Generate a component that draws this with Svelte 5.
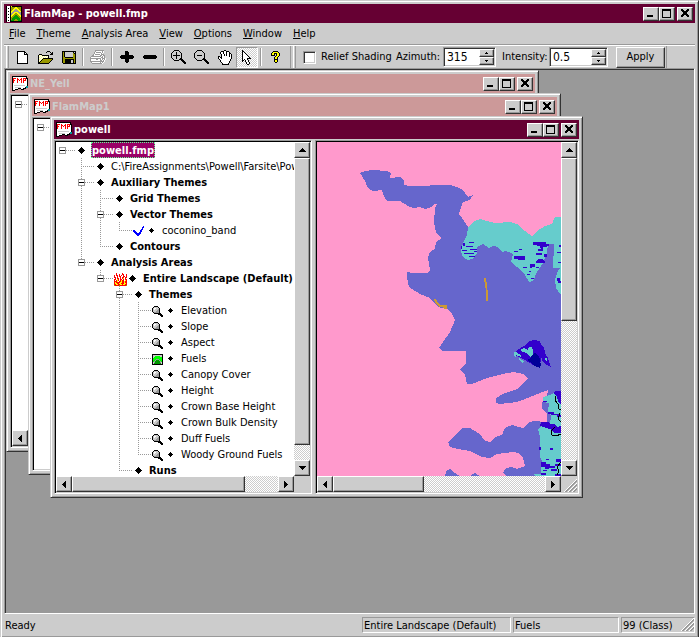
<script>
  const palette = {
    k: '#000', w: '#fff', g: '#999', s: '#ccc', d: '#666', y: '#ff0', o: '#990', Y: '#ffff99',
    r: '#f00', t: '#099', b: '#00f', G: '#0f0', e: '#090', a: '#cc9900'
  };

  const icons = {
    app: [
      'kwwwkykkkkkkkkkk', 'kwwwkooooyyooook', 'kwkwkoooyyyyoook', 'kwwwkooyyggyyook', 'kwwwkoyyggggyyok', 'kwkwkyyggggggyyk',
      'kwwwkyggyyyygggk', 'kwwwkggyyooyyggk', 'kwkwkgyyooooyygk', 'kwwwkyyooeeooyyk', 'kwwwkyooeeeeooyk', 'kwkwkooeeeeeeook',
      'kwwwkoeeeeeeeeok', 'kwwwkoeeeooeeeok', 'kwkwkeeeooooeeek', 'kwwwkkkkkkkkkkkk'
    ],
    doc: [
      'kkkkkkkkkkkkkkk.', 'kwwwwwwwwwwwwwk.', 'krrrwrwwwrwrrrkk', 'krwwwrrwrrwrwrwk', 'krrwwrwrwrwrrrwk', 'krwwwrwwwrwrwwwk',
      'krwwwrwwwrwrwwwk', 'kwwwwwwwwwwwwwwk', 'kwwwwwwwwwwwwwwk', 'kwssssssssssswwk', 'kwwwwwwwwwwwwwtt', 'kwwsssssswwwwktt',
      'kwwwwwkkkwwkkk..', 'kwwkkk...kkk....', 'kkk.............'
    ],
    blank: [
      'kkkkkkkk...', 'kwwwwwwkk..', 'kwwwwwwkwk.', 'kwwwwwwkkkk', 'kwwwwwwwwwk', 'kwwwwwwwwwk', 'kwwwwwwwwwk',
      'kwwwwwwwwwk', 'kwwwwwwwwwk', 'kwwwwwwwwwk', 'kwwwwwwwwwk', 'kwwwwwwwwwk', 'kkkkkkkkkkk'
    ],
    open: [
      '.........kkk...', '........k...k.k', '.............kk', '.kkk........kkk', 'kYwYkkkkkkk....', 'kwYwYwYwYwk....', 'kYwYwYwYwYk....',
      'kwYwYkkkkkkkkkk', 'kYwYkoooooooook', 'kwYkoooooooook.', 'kYkoooooooook..', 'kkoooooooook...', 'kkkkkkkkkkk....'
    ],
    save: [
      'kkkkkkkkkkkkkk', 'kokssssssssksk', 'kokssssssssokk', 'kokssssssssook', 'kokssssssssook', 'kokssssssssook', 'kookkkkkkkkook',
      'kooooooooooook', 'kookkkkkkkkkok', 'kookkkkkksskok', 'kookkkkkksskok', 'kookkkkkksskok', '.kkkkkkkkkkkkk'
    ],
    print: [
      '.....ggggggggg..', '.....gwwwwwwgw..', '....gwgggggwgw..', '....gwwwwwwgw...', '...gwgggggwggg..', '..ggwwwwwwggwgg.', '.ggggggggggwgwg.',
      'gwwwwwwwwwwggwg.', 'gggggggggggwgggw', 'gwwwwwggwwgwgwgw', 'gwwwwwwwwwggwgw.', 'ggggggggggggggw.', '.gwwwwwwwwgwgw..', '..ggggggggggw...'
    ],
    plus: [
      '.....kkk......', '.....kkkk.....', '.....kkkk.....', '.....kkkk.....', '.kkkkkkkkkkkk.', 'kkkkkkkkkkkkkk', 'kkkkkkkkkkkkkk',
      '.kkkkkkkkkkkk.', '.....kkkk.....', '.....kkkk.....', '.....kkkk.....', '......kk......'
    ],
    minus: ['.kkkkkkkkkkkk.', 'kkkkkkkkkkkkkk', 'kkkkkkkkkkkkkk', '.kkkkkkkkkkkk.'],
    zoomin: [
      '...kkkkk.......', '..k.....k......', '.k...k...k.....', 'k....k....k....', 'k....k....k....', 'k.kkkkkkk.k....', 'k....k....k....',
      'k....k....k....', '.k...k...kk....', '..k.....kkkk...', '...kkkkk..kkk..', '...........kkk.', '............kkk', '.............kk'
    ],
    zoomout: [
      '...kkkkk.......', '..k.....k......', '.k.......k.....', 'k.........k....', 'k.........k....', 'k..kkkkk..k....', 'k.........k....',
      'k.........k....', '.k.......kk....', '..k.....kkkk...', '...kkkkk..kkk..', '...........kkk.', '............kkk', '.............kk'
    ],
    hand: [
      '......kk......', '...kkkwwkkk...', '..kwwkwwkwwk..', '..kwwkwwkwwkk.', '...kwwkwkwwkwk', '...kwwkwkwwkwk', 'kk.kwwwwwwwkwk',
      'kwkkwwwwwwwwwk', 'kwwkwwwwwwwwwk', '.kwwwwwwwwwwk.', '..kwwwwwwwwwk.', '..kwwwwwwwwk..', '...kwwwwwwwk..', '....kwwwwwk...', '....kkkkkkk...'
    ],
    arrow: [
      'k.........', 'kk........', 'kwk.......', 'kwwk......', 'kwwwk.....', 'kwwwwk....', 'kwwwwwk...', 'kwwwwwwk..', 'kwwwwkkkk.',
      'kwkwwk....', 'kk.kwwk...', 'k..kwwk...', '....kwwk..', '....kwwk..', '.....kk...'
    ],
    help: [
      '..kkkkk..', '.kyyyyyk.', 'kyykkkyyk', 'kyyk.kyyk', 'kkkk.kyyk', '....kyyk.', '...kyyk..', '...kyyk..', '...kkkk..', '...kyyk..',
      '...kyyk..', '....kk...'
    ],
    diamond: ['...k...', '..kkk..', '.kkkkk.', 'kkkkkkk', '.kkkkk.', '..kkk..', '...k...'],
    dot: ['.......', '...k...', '..kkk..', '.kkkkk.', '..kkk..', '...k...', '.......'],
    lens: [
      '..kkkk.....', '.kssssk....', 'kswwsssk...', 'kswsssgk...', 'kssssggk...', 'ksssgggk...', '.kgggggk...', '..kkkkkkk..', '......kkkk.',
      '........kkk', '.........kk'
    ],
    check: [
      '..........b', '.........bb', '.........b.', '........bb.', 'bb.....bb..', 'bbb....bb..', '.bbb..bb...', '..bbbbbb...', '...bbbb....', '....bb.....'
    ],
    fuels: [
      'kkkkkkkkkkk', 'ksssssssssk', 'kssGGGGGssk', 'ksGGGGGGGGk', 'kGGGGGGGGGk', 'kGGGgggGGGk', 'kGGgeeegGGk', 'kGgeeeeegGk', 'ksgeeeeegsk',
      'kseeeeeeesk', 'kkkkkkkkkkk'
    ],
    fire: [
      '..r.....r....', '..r..r..rr..r', 'r.rr.r.r.r..r', 'r..r.rr..rr.r', 'rr.r..r.rr.rr', '.r.rr.r.ry.r.', 'rr.yr.rr.r.rr', 'r.ryr.ryrr.yr',
      'rrry.rryrryrr', 'ryrrrryyrryrr', 'ryyrryyrrryyr', 'rryyrryyryyrr', 'orrrrorrrrrro'
    ],
    up: ['...k...', '..kkk..', '.kkkkk.', 'kkkkkkk'],
    down: ['kkkkkkk', '.kkkkk.', '..kkk..', '...k...'],
    left: ['...k', '..kk', '.kkk', 'kkkk', '.kkk', '..kk', '...k'],
    right: ['k...', 'kk..', 'kkk.', 'kkkk', 'kkk.', 'kk..', 'k...'],
    spinup: ['.k.', 'kkk'],
    spindown: ['kkk', '.k.'],
    min: ['.......', '.......', '.......', '.......', '.......', '.......', 'kkkkkk.', 'kkkkkk.'],
    max: ['kkkkkkkkk', 'kkkkkkkkk', 'k.......k', 'k.......k', 'k.......k', 'k.......k', 'k.......k', 'k.......k', 'kkkkkkkkk'],
    close: ['kk....kk', 'kkk..kkk', '.kkkkkk.', '..kkkk..', '..kkkk..', '.kkkkkk.', 'kkk..kkk', 'kk....kk']
  };

  function layers(rows) {
    const out = {};
    rows.forEach((row, y) => {
      [...row].forEach((c, x) => {
        if (c !== '.') out[c] = (out[c] ?? '') + `M${x} ${y}h1v1h-1z`;
      });
    });
    return Object.entries(out);
  }

  const menus = ['File', 'Theme', 'Analysis Area', 'View', 'Options', 'Window', 'Help'];

  const tools = [
    ['blank', 'New'], ['open', 'Open'], ['save', 'Save'], null, ['print', 'Print'], null, ['plus', 'Add'], ['minus', 'Remove'], null,
    ['zoomin', 'Zoom in'], ['zoomout', 'Zoom out'], ['hand', 'Pan'], ['arrow', 'Select'], null, ['help', 'Help']
  ];

  // Guide codes: space = empty, | = line, t = branch, L = last branch, + = branch with box, - = last branch with box, o = root box
  const tree = [
    { g: 'o', text: 'powell.fmp', bold: true, selected: true },
    { g: ' t', text: 'C:\\FireAssignments\\Powell\\Farsite\\Powell.lcp' },
    { g: ' +', text: 'Auxiliary Themes', bold: true },
    { g: ' |t', text: 'Grid Themes', bold: true },
    { g: ' |+', text: 'Vector Themes', bold: true },
    { g: ' ||L', text: 'coconino_band', icon: 'check' },
    { g: ' |L', text: 'Contours', bold: true },
    { g: ' -', text: 'Analysis Areas', bold: true },
    { g: '  -', text: 'Entire Landscape (Default)', bold: true, icon: 'fire' },
    { g: '   +', text: 'Themes', bold: true },
    ...['Elevation', 'Slope', 'Aspect', 'Fuels', 'Canopy Cover', 'Height', 'Crown Base Height', 'Crown Bulk Density', 'Duff Fuels', 'Woody Ground Fuels']
      .map((text, i) => ({ g: i === 9 ? '   |L' : '   |t', text, icon: text === 'Fuels' ? 'fuels' : 'lens' })),
    { g: '   L', text: 'Runs', bold: true }
  ];

  let relief = $state(false);
  let azimuth = $state('315');
  let intensity = $state('0.5');
</script>

{#snippet pix(name)}
  {@const rows = icons[name]}
  <svg class="pix" width={rows[0].length} height={rows.length} viewBox="0 0 {rows[0].length} {rows.length}" shape-rendering="crispEdges" aria-hidden="true">
    {#each layers(rows) as [c, d]}<path {d} fill={palette[c]} />{/each}
  </svg>
{/snippet}

{#snippet caption(title, icon, active)}
  <header class="caption" class:active>
    {@render pix(icon)}
    <span class="title">{title}</span>
    <button class="raised ctl" aria-label="Minimize">{@render pix('min')}</button>
    <button class="raised ctl" aria-label="Maximize">{@render pix('max')}</button>
    <button class="raised ctl shut" aria-label="Close">{@render pix('close')}</button>
  </header>
{/snippet}

{#snippet treeList(rows)}
  <ul class="tree">
    {#each rows as row}
      <li>
        {#each row.g as c}
          <span class="guide" class:full={c === '|' || c === 't' || c === '+'} class:half={c === 'L' || c === '-'} class:arm={c !== ' ' && c !== '|'}>
            {#if c === '+' || c === '-' || c === 'o'}<i class="box"></i>{/if}
          </span>
        {/each}
        {#if row.icon}<span class="rowicon">{@render pix(row.icon)}</span>{/if}
        <span class="bullet">{@render pix(row.bold || !row.icon ? 'diamond' : 'dot')}</span>
        {#if row.text}<span class="label" class:bold={row.bold} class:selected={row.selected}>{row.text}</span>{/if}
      </li>
    {/each}
  </ul>
{/snippet}

{#snippet vbar(size)}
  <div class="bar vertical">
    <button class="raised arrow" aria-label="Scroll up">{@render pix('up')}</button>
    <div class="track"><div class="raised thumb" style:height="{size}%"></div></div>
    <button class="raised arrow" aria-label="Scroll down">{@render pix('down')}</button>
  </div>
{/snippet}

{#snippet hbar(size)}
  <div class="bar">
    <button class="raised arrow" aria-label="Scroll left">{@render pix('left')}</button>
    <div class="track"><div class="raised thumb" style:width="{size}%"></div></div>
    <button class="raised arrow" aria-label="Scroll right">{@render pix('right')}</button>
  </div>
{/snippet}

{#snippet grip()}
  <svg class="grip" width="13" height="13" viewBox="0 0 13 13" aria-hidden="true">
    <path d="M0 13L13 0M4 13L13 4M8 13L13 8" stroke="#fff" />
    <path d="M1 13L13 1M2 13L13 2M5 13L13 5M6 13L13 6M9 13L13 9M10 13L13 10" stroke="#999" />
  </svg>
{/snippet}

<main class="app">
  {@render caption('FlamMap - powell.fmp', 'app', true)}

  <nav class="menu">
    {#each menus as m}<button><u>{m[0]}</u>{m.slice(1)}</button>{/each}
  </nav>

  <div class="toolbar">
    <div class="band tools">
      {#each tools as tool}
        {#if tool}
          <button class="tool" class:pressed={tool[0] === 'arrow'} aria-label={tool[1]}>{@render pix(tool[0])}</button>
        {:else}
          <span class="sep"></span>
        {/if}
      {/each}
    </div>
    <div class="band fields">
      <input id="relief" class="tick" type="checkbox" bind:checked={relief} />
      <label class="relieflabel" for="relief">Relief Shading</label>
      <label class="azimuth" for="azimuth">Azimuth:</label>
      <div class="spin">
        <input id="azimuth" type="text" bind:value={azimuth} />
        <div class="steps">
          <button class="raised" aria-label="Increase azimuth">{@render pix('spinup')}</button>
          <button class="raised" aria-label="Decrease azimuth">{@render pix('spindown')}</button>
        </div>
      </div>
      <label class="intensity" for="intensity">Intensity:</label>
      <div class="spin wide">
        <input id="intensity" type="text" bind:value={intensity} />
        <div class="steps">
          <button class="raised" aria-label="Increase intensity">{@render pix('spinup')}</button>
          <button class="raised" aria-label="Decrease intensity">{@render pix('spindown')}</button>
        </div>
      </div>
      <button class="raised apply">Apply</button>
    </div>
  </div>

  <section class="desktop">
    <article class="window first">
      {@render caption('NE_Yell', 'doc', false)}
      <div class="panes">
        <div class="pane side">
          <div class="view">{@render treeList([{ g: 'o', bold: true }])}</div>
          {@render vbar(90)}
          {@render hbar(80)}
          <div class="corner"></div>
        </div>
      </div>
    </article>

    <article class="window second">
      {@render caption('FlamMap1', 'doc', false)}
      <div class="panes">
        <div class="pane side plain">
          <div class="view">{@render treeList([{ g: 'o', bold: true }])}</div>
        </div>
      </div>
    </article>

    <article class="window third">
      {@render caption('powell', 'doc', true)}
      <div class="panes">
        <div class="pane side">
          <div class="view">{@render treeList(tree)}</div>
          {@render vbar(95)}
          {@render hbar(84)}
          <div class="corner"></div>
        </div>
        <div class="pane mapside">
          <div class="view">
            <svg class="map" width="244" height="334" viewBox="317 142 244 334" shape-rendering="crispEdges" role="img" aria-label="Fuels map">
              <path fill="#6666cc" d="M360 173L365 171 373 170 387 171 391 173 390 178 400 177 404 181 404 185 410 186 450 185 457 187 463 190 468 197 473 195 470 200 463 202 459 214 462 218 468 227 561 240V476H506L503 473 506 468 512 467 517 469 525 466 523 458 519 453 513 452 497 454 490 458 482 457 470 451 458 449 450 447 448 442 453 437 463 428 470 428 480 434 485 441 491 442 495 437 502 435 505 428 512 425 523 428 528 423 533 421 547 422 547 413 542 409 542 403 547 397 548 390 540 393 525 399 517 402 500 404 496 403 496 398 503 394 517 389 524 383 528 378 523 374 513 372 503 374 487 378 472 384 467 384 465 375 460 369 466 364 466 351 442 351 439 348 443 342 450 332 455 320 452 314 447 309 438 307 430 298 420 294 409 287 407 277 407 272 413 273 427 273 430 270 428 258 430 252 435 249 436 242 442 238 436 233 434 222 435 208 437 204 434 204 432 207 425 209 420 207 413 208 408 206 400 201 387 201 384 196 382 190 373 191 368 188 365 181Z" />
              <path fill="#6666cc" d="M445 476L447 470 450 469 455 473 460 476ZM470 476L475 473 480 476Z" />
              <path fill="#66cccc" d="M468 227L475 221 480 219 487 221 495 223 510 222 517 224 525 231 532 236 537 231 545 226 552 224 555 217H561V268H553L554 244H548L547 253 543 263 537 272 533 281 529 282 525 275 517 267 511 262 513 254 506 251 502 252 498 247 493 246 489 248 483 244 477 247 477 253 474 258 468 260 463 257 461 251 463 243 467 235ZM561 268L558 270 555 280 556 288 561 295Z" />
              <path fill="#3300cc" d="M463 243h2v3h-3v3h-1v-3h2zM469 242h5v1h-5zM466 246h7v1h-7zM470 249h7v1h-7zM464 253h10v1h-10zM469 256h6v1h-6zM462 250h5v1h-5zM474 251h3v1h-3zM533 242h13v2h3v2h-6v2h-3v-2h-3v-1h-4zM538 249h5v2h-5zM541 246h6v1h-4v2h-2zM536 253h6v2h-6zM544 254h3v3h-3zM519 249h3v1h-3zM514 251h4v1h-4zM514 256h11v4h-7v-1h-4zM536 261l2-2h4l3 3-1 1h-8zM530 264h5v3h-3v1h-2zM523 267h4v1h-4zM536 267h3v1h-3zM527 274h3v1h-3zM529 271h2v1h-2zM531 278h3v1h-3zM559 245h2v2h-2zM557 252h4v1h-4zM558 262h3v1h-3zM557 278h3l1 5h-3z" />
              <path fill="#3300cc" d="M528 342L533 340 540 341 541 345 544 347 545 353 548 358 551 367 547 365 543 362 541 357 540 368 533 365 525 360 515 355 515 352 522 347 526 345Z" />
              <path fill="#66cccc" d="M514 352h2l5 3v2l-5-2v3l-2-3zM521 349l3-1 4 2 1-3h3l1 4v5l-3 1-4-4-5-2zM519 358l5 3-1 2-4-3zM545 358l2 0v3l-2-1z" />
              <path fill="#000099" d="M532 355l3-2 4 3 2 9-1 3-5-2-5-4-3-2 4-2z" />
              <path fill="#66cccc" d="M552 394l4-3h5v85h-26l-1-2h7l1-13-2-4v-20l-2-8 3-3 9-1 1-9-3-5 1-8-6-1v-5l4-1z" />
              <path fill="#3300cc" d="M553 393l3-2h5v14l-3-4-1-5zM543 401h4v1h-4zM548 412h6v2h6v1h-9v-1h-3zM541 422h7l3 2h3l3 3 4-1v4h-8l-4-1-5-2-4-1zM551 430h10v3h-7zM539 447h2v3h-2zM550 448h3v2h-3zM541 462h5v2h4v2h5v2h-6v1h-4v-2h-4zM543 470h4v1h-4zM551 469h6v2h-6zM556 459h5v3h-5zM541 473h5v2h-5zM555 464h6v2h-6zM555 474h6v2h-6zM557 415h4v2h-4zM546 459h3v1h-3z" />
              <path fill="none" stroke="#000" d="M556 396l-1 4 3 4 1 5h2M560 413l-2 6 3 3M555 427l-4 4 1 4 4 1 5-2M561 462l-4 5 2 4-2 4" />
              <path fill="#cc9933" d="M484 278h2l1 8 1 8v7h-2v-10l-1-6zM434 299h2l2 4 3 2h6v4h-3l-2-2h-3l-4-4z" />
            </svg>
          </div>
          {@render vbar(54)}
          {@render hbar(43)}
          <div class="corner">{@render grip()}</div>
        </div>
      </div>
    </article>
  </section>

  <footer class="status">
    <span class="ready">Ready</span>
    <span class="cell area">Entire Landscape (Default)</span>
    <span class="cell theme">Fuels</span>
    <span class="cell value">99 (Class){@render grip()}</span>
  </footer>
</main>

<style>
  :global(body) { background: #ccc; }
  * { box-sizing: border-box; }
  button, input { font: inherit; color: inherit; margin: 0; padding: 0; border: 0; border-radius: 0; background: none; }
  .pix { display: block; flex: none; }
  .app {
    display: flex; flex-direction: column; min-height: 100vh; padding: 3px; background: #ccc; color: #000;
    font: 11px/14px "DejaVu Sans Condensed", "DejaVu Sans", sans-serif;
    border: 1px solid; border-color: #ccc #333 #333 #ccc; box-shadow: inset 1px 1px #fff, inset -1px -1px #999;
  }
  .raised {
    display: flex; align-items: center; justify-content: center; background: #ccc;
    border: 1px solid; border-color: #fff #333 #333 #fff; box-shadow: inset -1px -1px #999;
  }

  .caption { display: flex; align-items: center; height: 19px; flex: none; padding: 0 2px; background: #c99; color: #ccc; }
  .caption.active { background: #603; color: #fff; }
  .title { flex: 1; padding-left: 2px; font-weight: bold; white-space: nowrap; }
  .ctl { width: 16px; height: 14px; padding: 0 1px 1px 0; }
  .shut { margin-left: 2px; }

  .menu { display: flex; height: 22px; padding: 0 5px; gap: 11px; align-items: center; border-bottom: 1px solid #999; }
  .toolbar { display: flex; height: 23px; border-top: 1px solid #fff; flex: none; }
  .band { display: flex; align-items: center; border-left: 1px solid #fff; border-right: 1px solid #999; box-shadow: inset 1px 0 #ccc, inset 2px 0 #999; margin-left: 2px; }
  .tools { padding: 0 3px 0 4px; }
  .tool { display: flex; align-items: center; justify-content: center; width: 23px; height: 21px; }
  .tool.pressed {
    width: 22px; border: 1px solid; border-color: #999 #fff #fff #999;
    background: conic-gradient(#fff 25%, #ccc 0 50%, #fff 0 75%, #ccc 0) 0 0 / 2px 2px;
  }
  .sep { width: 2px; height: 18px; margin: 0 2px; border-left: 1px solid #999; border-right: 1px solid #fff; }
  .fields { padding: 0 1px 0 9px; }
  .tick { appearance: none; width: 13px; height: 13px; background: #fff; border: 1px solid; border-color: #999 #fff #fff #999; box-shadow: inset 1px 1px #333, inset -1px -1px #ccc; }
  .relieflabel { width: 73px; padding-left: 5px; white-space: nowrap; }
  .azimuth { width: 47px; margin-left: 7px; }
  .intensity { width: 47px; margin-left: 6px; }
  .spin { display: flex; width: 53px; height: 20px; padding: 1px; background: #fff; border: 1px solid; border-color: #999 #fff #fff #999; box-shadow: inset 1px 1px #333, inset -1px -1px #ccc; }
  .spin.wide { width: 59px; }
  .spin input { flex: 1; min-width: 0; padding-left: 2px; font-size: 12px; outline: none; }
  .steps { display: flex; flex-direction: column; width: 15px; }
  .steps button { flex: 1; min-height: 0; }
  .apply { width: 49px; height: 21px; margin-left: 8px; }

  .desktop {
    position: relative; flex: 1; min-height: 546px; overflow: hidden; background: #999;
    border: 1px solid; border-color: #999 #fff #fff #999; box-shadow: inset 1px 1px #333;
  }
  .window {
    position: absolute; display: flex; flex-direction: column; width: 533px; height: 382px; padding: 3px; background: #ccc;
    border: 1px solid; border-color: #ccc #333 #333 #ccc; box-shadow: inset 1px 1px #fff, inset -1px -1px #999;
  }
  .first { left: 1px; top: 1px; }
  .second { left: 23px; top: 24px; }
  .third { left: 45px; top: 47px; }
  .panes { display: flex; flex: 1; min-height: 0; padding-top: 1px; gap: 3px; }
  .pane {
    display: grid; grid-template: 1fr 16px / 1fr 16px; min-width: 0; padding: 1px;
    border: 1px solid; border-color: #999 #fff #fff #999; box-shadow: inset 1px 1px #000;
  }
  .side { width: 258px; }
  .mapside { flex: 1; }
  .plain { grid-template: 1fr / 1fr; }
  .view { overflow: hidden; min-width: 0; min-height: 0; background: #fff; }
  .mapside .view { background: #f9c; }
  .map { display: block; }
  .bar { display: flex; min-width: 0; min-height: 0; background: conic-gradient(#fff 25%, #ccc 0 50%, #fff 0 75%, #ccc 0) 0 0 / 2px 2px; }
  .vertical { flex-direction: column; }
  .arrow { width: 16px; height: 16px; flex: none; }
  .track { flex: 1; min-width: 0; min-height: 0; }
  .thumb { height: 100%; }
  .corner { display: flex; align-items: flex-end; justify-content: flex-end; background: #ccc; }
  .grip { display: block; }

  .tree { margin: 0; padding: 0 0 0 3px; list-style: none; }
  .tree li { display: flex; height: 16px; align-items: center; white-space: nowrap; }
  .guide {
    flex: none; display: flex; align-items: center; width: 19px; height: 16px; background-repeat: no-repeat;
    --v: repeating-linear-gradient(#999 0 1px, transparent 1px 2px);
    --h: repeating-linear-gradient(90deg, #999 0 1px, transparent 1px 2px);
  }
  .full { background-image: var(--v); background-size: 1px 16px; background-position: 3px 0; }
  .arm { background-image: var(--h); background-size: 13px 1px; background-position: 3px 8px; }
  .full.arm { background-image: var(--v), var(--h); background-size: 1px 16px, 13px 1px; background-position: 3px 0, 3px 8px; }
  .half.arm { background-image: var(--v), var(--h); background-size: 1px 8px, 13px 1px; background-position: 3px 0, 3px 8px; }
  .box { width: 7px; height: 7px; margin-top: 1px; border: 1px solid #999; background: linear-gradient(#000, #000) center / 5px 1px no-repeat #fff; }
  .rowicon { flex: none; width: 13px; padding-top: 2px; margin: 0 2px 0 -2px; }
  .bullet { flex: none; width: 13px; }
  .label { padding: 2px 1px 0; line-height: 14px; }
  .bold { font-weight: bold; }
  .selected { background: #906; color: #fff; outline: 1px dotted #6f9; outline-offset: -1px; }

  .status { display: flex; align-items: center; height: 20px; flex: none; padding-top: 2px; gap: 2px; }
  .ready { flex: 1; padding: 1px 0 0 1px; }
  .cell { height: 16px; padding-left: 1px; line-height: 15px; white-space: nowrap; border: 1px solid; border-color: #999 #fff #fff #999; }
  .area { width: 149px; }
  .theme { width: 106px; }
  .value { display: flex; justify-content: space-between; width: 74px; }
</style>
